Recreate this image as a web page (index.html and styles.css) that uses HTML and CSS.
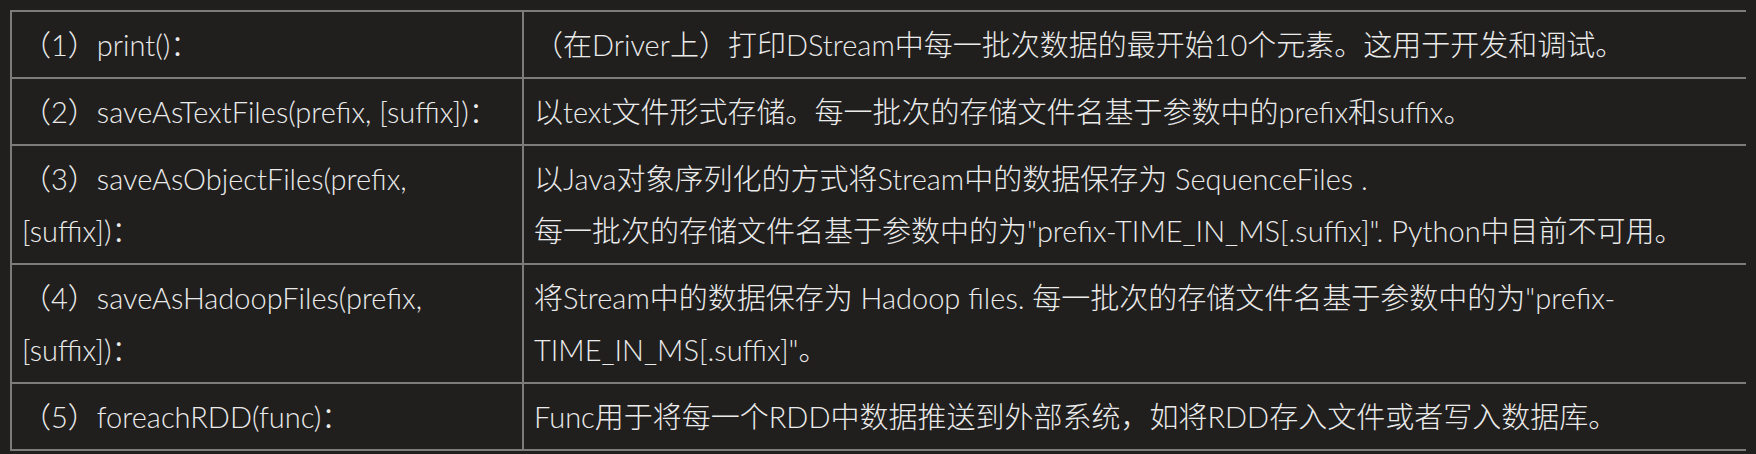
FILE: index.html
```html
<!DOCTYPE html>
<html lang="zh-CN">
<head>
  <meta charset="UTF-8" />
  <meta name="viewport" content="width=device-width, initial-scale=1.0" />
  <title>DStream 输出操作</title>
  <link rel="stylesheet" href="styles.css">
</head>
<body>
  <table class="ops">
    <tr>
      <td class="name">（1）print()：</td>
      <td class="desc">（在Driver上）打印DStream中每一批次数据的最开始10个元素。这用于开发和调试。</td>
    </tr>
    <tr>
      <td class="name">（2）saveAsTextFiles(prefix, [suffix])：</td>
      <td class="desc">以text文件形式存储。每一批次的存储文件名基于参数中的prefix和suffix。</td>
    </tr>
    <tr>
      <td class="name">（3）saveAsObjectFiles(prefix,<br>[suffix])：</td>
      <td class="desc">以Java对象序列化的方式将Stream中的数据保存为 SequenceFiles .<br>每一批次的存储文件名基于参数中的为"prefix-TIME_IN_MS[.suffix]". Python中目前不可用。</td>
    </tr>
    <tr>
      <td class="name">（4）saveAsHadoopFiles(prefix,<br>[suffix])：</td>
      <td class="desc">将Stream中的数据保存为 Hadoop files. 每一批次的存储文件名基于参数中的为"prefix-<br>TIME_IN_MS[.suffix]"。</td>
    </tr>
    <tr>
      <td class="name">（5）foreachRDD(func)：</td>
      <td class="desc">Func用于将每一个RDD中数据推送到外部系统，如将RDD存入文件或者写入数据库。</td>
    </tr>
  </table>
</body>
</html>
```

FILE: styles.css
```css
html, body {
  background: #201f1e;
}
body {
  margin: 10px;
  padding: 0;
  color: #ebebeb;
  font-family: Lato, "Noto Sans CJK SC", sans-serif;
  font-size: 29px;
  font-weight: 300;
  line-height: 52px;
}
.ops {
  width: 1742px;
  border-collapse: collapse;
  border: 2px solid #7c7c7c;
}
.ops td {
  border: 2px solid #7c7c7c;
  padding: 7px 10px 6px 10px;
  vertical-align: middle;
  text-align: left;
}
.ops .name {
  width: 490px;
  white-space: nowrap;
}
```
